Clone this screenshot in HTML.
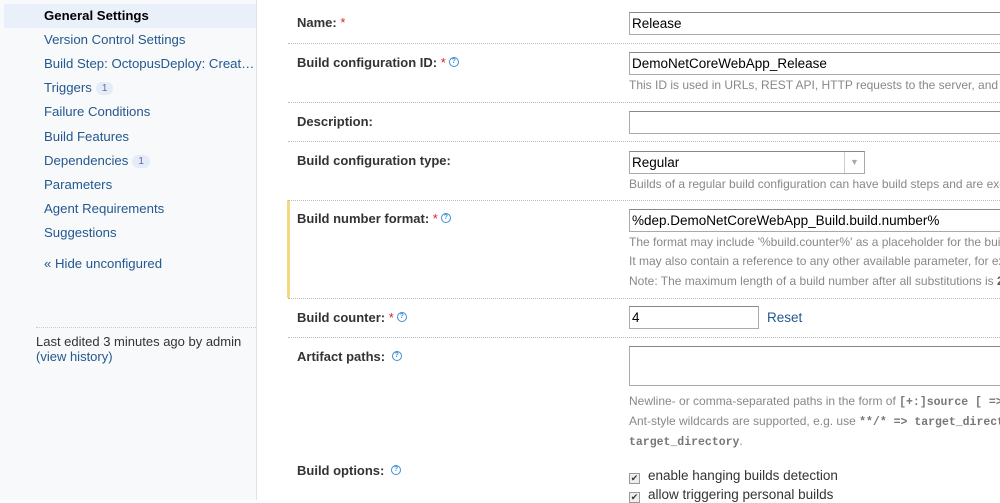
<!DOCTYPE html>
<html><head><meta charset="utf-8"><style>
*{margin:0;padding:0;box-sizing:border-box}
body{width:1000px;height:500px;overflow:hidden;background:#fff;font-family:"Liberation Sans",Arial,sans-serif;font-size:13px;color:#333;position:relative}
.a,.nav,.lbl,.inp,.help{position:absolute;white-space:nowrap}
#side{position:absolute;left:0;top:0;width:257px;height:500px;background:#f7f9fb;border-right:1px solid #dde3ec;overflow:hidden}
.nav{left:44px;color:#24588f;font-size:13.2px}
.sel{position:absolute;left:4px;top:4px;width:252px;height:24px;background:#e9f0f9}
.badge{display:inline-block;background:#e4ecf7;color:#6a5fa8;font-size:10px;border-radius:8px;padding:1px 6px;margin-left:4px;vertical-align:1px}
.lbl{left:297px;font-weight:bold;color:#333;font-size:13px}
.st{color:#d22;font-weight:normal}
.q{display:inline-block;width:10px;height:10px;border:1px solid #3d8fd6;border-radius:50%;font-size:7px;color:#3d8fd6;text-align:center;line-height:8px;font-weight:bold;vertical-align:4px;margin-left:3px}
.inp{left:629px;height:23px;border:1px solid #aaa;border-top-color:#888;background:#fff;padding:3px 2px;font-size:13.5px;color:#000}
.help{left:629px;color:#888;font-size:12px}
.sep{position:absolute;left:288px;width:712px;border-top:1px dotted #bbb}
code{font-family:"Liberation Mono",monospace;font-weight:bold;color:#777;font-size:11.5px}
.cb{display:inline-block;width:11px;height:11px;border:1px solid #999;background:#eee;font-size:9px;line-height:9px;text-align:center;color:#333;margin-right:8px;vertical-align:-1px}
</style></head><body>
<div id="side">
<div class="sel"></div>
<div class="nav" style="top:8px;color:#000;font-weight:bold">General Settings</div>
<div class="nav" style="top:32px">Version Control Settings</div>
<div class="nav" style="top:56px">Build Step: OctopusDeploy: Creat…</div>
<div class="nav" style="top:80px">Triggers<span class="badge">1</span></div>
<div class="nav" style="top:104px">Failure Conditions</div>
<div class="nav" style="top:129px">Build Features</div>
<div class="nav" style="top:153px">Dependencies<span class="badge">1</span></div>
<div class="nav" style="top:177px">Parameters</div>
<div class="nav" style="top:201px">Agent Requirements</div>
<div class="nav" style="top:225px">Suggestions</div>
<div class="nav" style="top:256px">« Hide unconfigured</div>
<div class="a" style="left:36px;top:327px;width:220px;border-top:1px dotted #ccc"></div>
<div class="a" style="left:36px;top:334px;color:#333;font-size:13px;line-height:15px">Last edited 3 minutes ago by admin<br><span style="color:#24588f">(view history)</span></div>
</div>

<div class="a" style="left:287px;top:200px;width:3px;height:98px;background:#f5d97e"></div>

<div class="lbl" style="top:15px">Name: <span class="st">*</span></div>
<div class="inp" style="top:12px;width:380px">Release</div>
<div class="sep" style="top:43px"></div>

<div class="lbl" style="top:55px">Build configuration ID: <span class="st">*</span><span class="q">?</span></div>
<div class="inp" style="top:52px;width:380px">DemoNetCoreWebApp_Release</div>
<div class="help" style="top:78px">This ID is used in URLs, REST API, HTTP requests to the server, and c</div>
<div class="sep" style="top:102px"></div>

<div class="lbl" style="top:114px">Description:</div>
<div class="inp" style="top:111px;width:380px"></div>
<div class="sep" style="top:141px"></div>

<div class="lbl" style="top:153px">Build configuration type:</div>
<div class="inp" style="top:151px;width:236px">Regular<span style="position:absolute;right:0;top:0;width:20px;height:21px;border-left:1px solid #ccc;color:#aaa;font-size:9px;text-align:center;line-height:21px">▼</span></div>
<div class="help" style="top:177px">Builds of a regular build configuration can have build steps and are exec</div>
<div class="sep" style="top:200px"></div>

<div class="lbl" style="top:211px">Build number format: <span class="st">*</span><span class="q">?</span></div>
<div class="inp" style="top:209px;width:380px">%dep.DemoNetCoreWebApp_Build.build.number%</div>
<div class="help" style="top:235px">The format may include '%build.counter%' as a placeholder for the build</div>
<div class="help" style="top:254px">It may also contain a reference to any other available parameter, for exa</div>
<div class="help" style="top:274px">Note: The maximum length of a build number after all substitutions is <b style="color:#555">25</b></div>
<div class="sep" style="top:298px"></div>

<div class="lbl" style="top:310px">Build counter: <span class="st">*</span><span class="q">?</span></div>
<div class="inp" style="top:306px;width:130px">4</div>
<div class="a" style="left:767px;top:310px;color:#24588f;font-size:13.5px">Reset</div>
<div class="sep" style="top:337px"></div>

<div class="lbl" style="top:349px">Artifact paths: <span class="q">?</span></div>
<div class="inp" style="top:346px;width:380px;height:40px"></div>
<div class="help" style="top:394px">Newline- or comma-separated paths in the form of <code>[+:]source [ =&gt; t</code></div>
<div class="help" style="top:414px">Ant-style wildcards are supported, e.g. use <code>**/* =&gt; target_director</code></div>
<div class="help" style="top:434px"><code>target_directory</code>.</div>

<div class="lbl" style="top:463px">Build options: <span class="q">?</span></div>
<div class="a" style="left:629px;top:468px;font-size:13.5px;color:#333"><span class="cb">✔</span>enable hanging builds detection</div>
<div class="a" style="left:629px;top:487px;font-size:13.5px;color:#333"><span class="cb">✔</span>allow triggering personal builds</div>
</body></html>
